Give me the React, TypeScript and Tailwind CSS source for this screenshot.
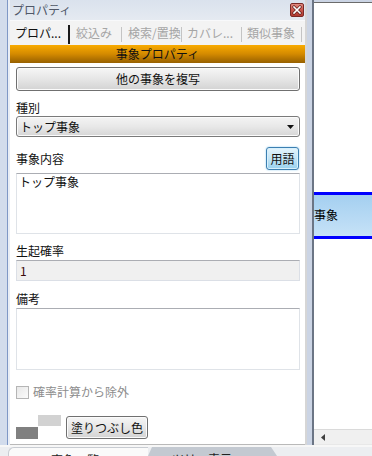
import React from "react";

function CloseBtn() {
  return (
    <div className="w-[14px] h-[14px] rounded-[2px] border border-[#7a2a26] bg-linear-to-b from-[#e08a80] via-[#c8564c] to-[#b0392f] flex items-center justify-center">
      <svg width="10" height="10" viewBox="0 0 10 10">
        <path d="M2 2 L8 8 M8 2 L2 8" stroke="#5a1a16" strokeWidth="3" strokeLinecap="square" />
        <path d="M2 2 L8 8 M8 2 L2 8" stroke="#ffffff" strokeWidth="1.6" strokeLinecap="square" />
      </svg>
    </div>
  );
}

export default function App() {
  return (
    <div className="w-[372px] h-[456px] overflow-hidden flex flex-col bg-[#eceef1] font-['Noto_Sans_CJK_JP','Noto_Sans',sans-serif] text-[12px] leading-[14px] text-[#111111]">
      <div className="flex h-[445px]">
        <div className="w-[7px] bg-[#d2dcec]" />
        <div className="w-[1px] bg-[#7f98c6]" />
        <div className="w-[2px] bg-[#e9eef6]" />
        {/* panel */}
        <div className="w-[295px] flex flex-col">
          <div className="h-[20px] flex items-center justify-between pl-[2px] pr-[1px] bg-linear-to-b from-[#dae2ed] to-[#e5eaf1]">
            <span className="text-[#505868]">プロパティ</span>
            <CloseBtn />
          </div>
          <div className="h-[1px] bg-[#f8f9fb]" />
          <div className="h-[24px] flex bg-[#f3f3f3] text-[#a5a5a5] whitespace-nowrap">
            <div className="w-[58px] pl-[5px] flex items-center text-[#111111] overflow-hidden">プロパ...</div>
            <div className="w-[2px] mt-[4px] mb-[1px] bg-[#1a1a1a]" />
            <div className="w-[51px] pl-[6px] flex items-center overflow-hidden">絞込み</div>
            <div className="w-[1px] mt-[6px] mb-[3px] bg-[#c4c4c4]" />
            <div className="w-[59px] pl-[6px] flex items-center overflow-hidden">検索/置換</div>
            <div className="w-[1px] mt-[6px] mb-[3px] bg-[#c4c4c4]" />
            <div className="w-[59px] pl-[5px] flex items-center overflow-hidden">カバレ...</div>
            <div className="w-[1px] mt-[6px] mb-[3px] bg-[#c4c4c4]" />
            <div className="w-[59px] pl-[5px] flex items-center overflow-hidden">類似事象</div>
            <div className="w-[1px] mt-[6px] mb-[3px] bg-[#c4c4c4]" />
            <div className="flex-1" />
          </div>
          <div className="h-[18px] flex items-center justify-center bg-linear-to-b from-[#f9ab00] via-[#d48a00] to-[#976000] text-[#111111]">
            事象プロパティ
          </div>
          <div className="flex-1 bg-white border-b border-[#b9b9b9] pl-[6px] pr-[5px] pt-[4px] flex flex-col">
            <div className="h-[24px] w-full rounded-[3px] border border-[#707070] bg-linear-to-b from-[#f6f6f6] via-[#e6e6e6] to-[#d3d3d3] shadow-[inset_0_0_0_1px_#fbfbfb] flex items-center justify-center">
              他の事象を複写
            </div>
            <div className="mt-[10px]">種別</div>
            <div className="mt-[1px] h-[21px] rounded-[3px] border border-[#7a7a7a] bg-linear-to-b from-[#f4f4f4] via-[#e8e8e8] to-[#d6d6d6] shadow-[inset_0_0_0_1px_#fbfbfb] flex items-center justify-between pl-[3px] pr-[5px]">
              <span>トップ事象</span>
              <svg width="7" height="4" viewBox="0 0 7 4">
                <polygon points="0,0 7,0 3.5,4" fill="#111111" />
              </svg>
            </div>
            <div className="mt-[10px] h-[23px] flex items-center justify-between">
              <span>事象内容</span>
              <div className="mr-[1px] w-[33px] h-[23px] rounded-[3px] border border-[#3c7fb1] bg-linear-to-b from-[#e5f4fc] via-[#c4e5f6] to-[#98d1ef] shadow-[inset_0_0_0_1px_#d8f0fc,0_0_2px_#8ccbee] flex items-center justify-center">
                用語
              </div>
            </div>
            <div className="mt-[3px] h-[61px] border border-[#dfe3e8] border-t-[#abadb3] pl-[2px] pt-[1px]">
              トップ事象
            </div>
            <div className="mt-[10px]">生起確率</div>
            <div className="mt-[2px] h-[21px] border border-[#dbdfe6] border-t-[#abadb3] bg-[#f0f0f0] pl-[3px] flex items-center text-[#3a0a0a]">
              1
            </div>
            <div className="mt-[11px]">備考</div>
            <div className="mt-[2px] h-[62px] border border-[#dfe3e8] border-t-[#abadb3]" />
            <div className="mt-[16px] h-[12px] flex items-center gap-[4px] text-[#8c8c8c]">
              <div className="w-[13px] h-[13px] border border-[#b5b5b5] bg-linear-to-br from-[#e8e8e8] to-[#fbfbfb]" />
              <span>確率計算から除外</span>
            </div>
            <div className="mt-[17px] flex items-start gap-[5px]">
              <div className="grid grid-cols-[22px_23px] grid-rows-[12px_12px]">
                <div className="bg-white" />
                <div className="bg-[#d2d2d2] mb-[1px]" />
                <div className="bg-[#808080]" />
                <div className="bg-white" />
              </div>
              <div className="mt-[1px] h-[23px] w-[82px] rounded-[3px] border border-[#707070] bg-linear-to-b from-[#f6f6f6] via-[#e6e6e6] to-[#d3d3d3] shadow-[inset_0_0_0_1px_#fbfbfb] flex items-center justify-center">
                塗りつぶし色
              </div>
            </div>
          </div>
        </div>
        <div className="w-[2px] bg-[#d6d6d6]" />
        <div className="w-[5px] bg-[#cbd4e4]" />
        <div className="w-[2px] bg-[#6b7585]" />
        {/* canvas */}
        <div className="flex-1 flex flex-col bg-[#cbd4e4]">
          <div className="mt-[2px] flex-1 relative overflow-hidden bg-white border-t border-[#6b6b6b]">
            <div className="absolute top-[189px] left-[-40px] w-[120px] h-[47px] border-y-[3px] border-[#0000ff] bg-linear-to-b from-[#a4cff0] to-[#c6e2f7]">
              <span className="absolute left-[4px] top-[13px] text-[#000000] whitespace-nowrap">トップ事象</span>
            </div>
          </div>
          <div className="h-[15px] bg-[#f0f0f0] border-t border-[#dadada] flex items-center pl-[7px]">
            <svg width="4" height="7" viewBox="0 0 4 7">
              <polygon points="4,0 4,7 0,3.5" fill="#404040" />
            </svg>
          </div>
          <div className="h-[1px] bg-[#e8e8e8]" />
        </div>
      </div>
      <div className="h-[2px] bg-[#f7f7f7]" />
      <div className="h-[9px] flex bg-[#eceef1] overflow-hidden">
        <div className="w-[8px]" />
        <div className="w-[140px] rounded-tl-[6px] bg-[#fafafa] border-t border-l border-[#c8ccd2] pl-[42px] text-[#222] whitespace-nowrap overflow-hidden">
          <div className="mt-[5px]">事象一覧</div>
        </div>
        <div className="w-[129px] bg-[#c3c9d1] [clip-path:polygon(4px_0,calc(100%-6px)_0,100%_100%,0_100%)] pl-[24px] text-[#222] whitespace-nowrap overflow-hidden">
          <div className="mt-[5px]">ツリー表示　　　　集</div>
        </div>
      </div>
    </div>
  );
}
